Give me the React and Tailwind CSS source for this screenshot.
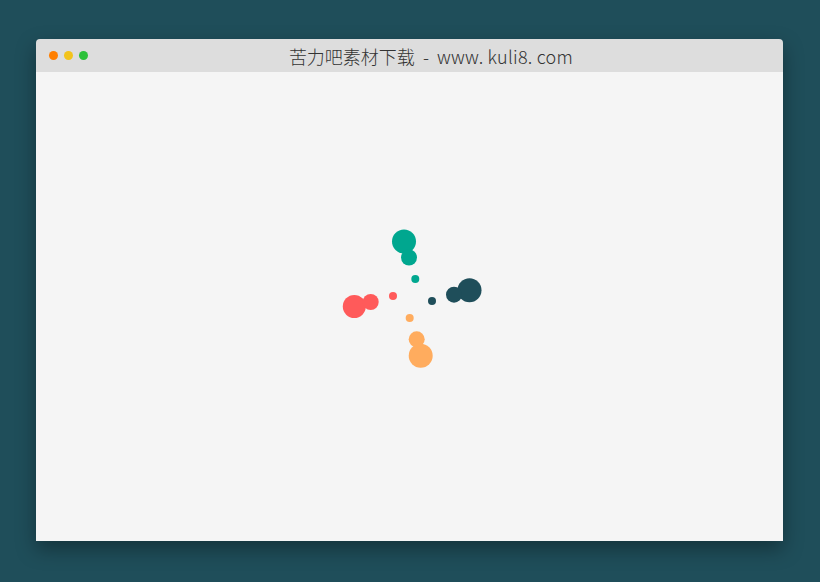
export default function App() {
  const ox = 36, oy = 72;
  const circles = [
    [404, 241.5, 12, "#00a78f"],
    [409, 257.5, 8, "#00a78f"],
    [415.3, 279, 4, "#00a78f"],
    [469.5, 290.3, 12, "#1f4e5a"],
    [454, 294.7, 8, "#1f4e5a"],
    [432, 301, 4, "#1f4e5a"],
    [354.3, 306.5, 11.5, "#ff5a5a"],
    [370.7, 302, 8, "#ff5a5a"],
    [393, 296, 4, "#ff5a5a"],
    [420.7, 355.7, 12, "#ffac5e"],
    [416.7, 339.3, 8, "#ffac5e"],
    [409.7, 318, 4, "#ffac5e"],
  ];
  return (
    <div className="w-[820px] h-[582px] bg-[#1f4e5a] pt-[39px] pl-[36px] overflow-hidden">
      <div className="w-[747px] h-[502px] flex flex-col rounded-t-[4px] overflow-hidden shadow-[0_8px_20px_rgba(0,0,0,0.35)]">
        <div className="h-[33px] bg-[#dddddd] flex items-center">
          <div className="flex items-center gap-[6px] pl-[13px]">
            <span className="w-[9px] h-[9px] rounded-full bg-[#ff7f00]"></span>
            <span className="w-[9px] h-[9px] rounded-full bg-[#f2c31b]"></span>
            <span className="w-[9px] h-[9px] rounded-full bg-[#2dc13a]"></span>
          </div>
          <div className="flex-1 flex justify-center">
            <span className="ml-[-9px] flex items-center text-[18px] leading-none text-[#333333] font-light whitespace-nowrap" style={{ fontFamily: '"Noto Sans CJK SC", "Noto Sans", sans-serif' }}>
              <span>苦力吧素材下载</span>
              <span className="mx-[8px]">-</span>
              <span className="tracking-[0.3px]">www.</span>
              <span className="ml-[4px] tracking-[0.3px]">kuli8.</span>
              <span className="ml-[4px] tracking-[0.3px]">com</span>
            </span>
          </div>
        </div>
        <div className="flex-1 bg-[#f5f5f5]">
          <svg width="747" height="469" viewBox="0 0 747 469">
            {circles.map(([x, y, r, c], i) => (
              <circle key={i} cx={x - ox} cy={y - oy} r={r} fill={c} />
            ))}
          </svg>
        </div>
      </div>
    </div>
  );
}
